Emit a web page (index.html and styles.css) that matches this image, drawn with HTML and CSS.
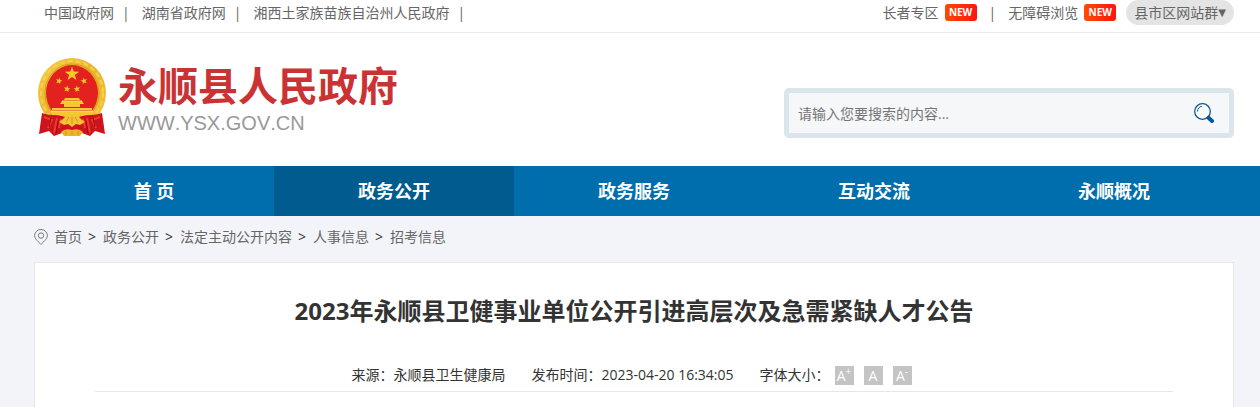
FILE: index.html
```html
<!DOCTYPE html>
<html lang="zh-CN">

<head>
    <meta charset="UTF-8">
    <meta name="viewport" content="width=device-width, initial-scale=1.0">
    <title>2023年永顺县卫健事业单位公开引进高层次及急需紧缺人才公告</title>
    <link rel="stylesheet" href="styles.css">
</head>

<body>
    <div class="top-bar">
        <div class="wrap top-inner">
            <div class="top-links">
                <a href="#">中国政府网</a><span class="line">|</span>
                <a href="#">湖南省政府网</a><span class="line">|</span>
                <a href="#">湘西土家族苗族自治州人民政府</a><span class="line">|</span>
            </div>
            <div class="top-tools">
                <a href="#">长者专区</a><span class="new">NEW</span>
                <span class="line tools-line">|</span>
                <a href="#">无障碍浏览</a><span class="new">NEW</span>
                <button type="button" class="site-group">县市区网站群<span class="arrow">▼</span></button>
            </div>
        </div>
    </div>

    <header class="wrap header">
        <a href="#" class="logo">
            <svg class="emblem" viewBox="0 0 70 80" width="70" height="80" aria-hidden="true">
                <defs>
                    <linearGradient id="gold" x1="0" y1="0" x2="1" y2="1">
                        <stop offset="0" stop-color="#f7cf45" />
                        <stop offset="0.5" stop-color="#e9b32a" />
                        <stop offset="1" stop-color="#f3c636" />
                    </linearGradient>
                    <path id="star" d="M0-10 2.4-3.2 9.5-3.1 3.8 1.2 5.9 8.1 0 4-5.9 8.1-3.8 1.2-9.5-3.1-2.4-3.2Z" />
                </defs>
                <ellipse cx="35" cy="36" rx="34" ry="35" fill="url(#gold)" />
                <ellipse cx="35" cy="36" rx="31" ry="32" fill="none" stroke="#f6d152" stroke-width="2" stroke-dasharray="5 3" />
                <ellipse cx="35" cy="36" rx="27" ry="29" fill="none" stroke="#d99a1c" stroke-width="1" />
                <ellipse cx="35" cy="36" rx="26" ry="28" fill="#e3211e" />
                <g fill="#f6c82f">
                    <use href="#star" transform="translate(35 17) scale(.75)" />
                    <use href="#star" transform="translate(22 24) rotate(15) scale(.36)" />
                    <use href="#star" transform="translate(47 24) rotate(-15) scale(.36)" />
                    <use href="#star" transform="translate(30 32) rotate(10) scale(.36)" />
                    <use href="#star" transform="translate(40 32) rotate(-10) scale(.36)" />
                    <path d="M28 41H42L43 43H27ZM25 44H45L47 47H23ZM27 47H43V50H27Z" />
                    <path d="M15 51H55V53H15ZM13 54H57L54 60H16Z" />
                </g>
                <path d="M25 44H45M14 54H56" stroke="#ffe668" />
                <path d="M5 56Q10 58 16 58Q26 58 35 63Q44 58 54 58Q60 58 65 56L68 77 58 74 53 79 45 76 35 77 25 76 17 79 12 74 2 77Z" fill="#cd131b" />
                <path d="M7 60 15 63 11 71M63 60 55 63 59 71M20 61 17 76M50 61 53 76M24 62 22 71M46 62 48 71" fill="none" stroke="#ee3a2d" stroke-width="2" />
                <path d="M14 61 12 70M56 61 58 70M21 64 19 76M49 64 51 76" fill="none" stroke="#980b14" />
                <path d="M26 62 30 58H40L44 62 48 65 43 68 39 67 35 70 31 67 27 68 22 65Z" fill="#f3c335" />
                <path d="M29 65 32 60M41 65 38 60M35 67V60" stroke="#d3951c" />
                <path d="M24 75Q28 71 35 73Q42 71 46 75L43 79H27Z" fill="#edb52a" />
                <path d="M29 74V78M35 74V78M41 74V78" stroke="#d2951c" />
            </svg>
            <span class="logo-text">
                <strong class="logo-name">永顺县人民政府</strong>
                <span class="logo-url">WWW.YSX.GOV.CN</span>
            </span>
        </a>
        <form class="search">
            <input type="text" id="keyword" placeholder="请输入您要搜索的内容..." aria-label="请输入您要搜索的内容">
            <button type="submit" class="search-btn" aria-label="搜索">
                <svg viewBox="0 0 20 20" width="20" height="20">
                    <circle cx="8.5" cy="8.5" r="7.8" fill="#fff" stroke="#0a5797" stroke-width="1.3" />
                    <path d="M3.5 8.5Q3.7 4 8 3.2" fill="none" stroke="#0a5797" />
                    <path d="M14.5 14.8 18 18" stroke="#0a5797" stroke-width="4" stroke-linecap="round" />
                </svg>
            </button>
        </form>
    </header>

    <nav class="nav">
        <div class="wrap nav-list">
            <a href="#">首 页</a>
            <a href="#" class="active">政务公开</a>
            <a href="#">政务服务</a>
            <a href="#">互动交流</a>
            <a href="#">永顺概况</a>
        </div>
    </nav>

    <main class="wrap">
        <div class="position">
            <svg class="pin" viewBox="0 0 14 16" width="14" height="16" fill="none" stroke="#777" aria-hidden="true">
                <path d="M7 15.4C5.3 13.3.6 10.3.6 6.6A6.4 6.1 0 0 1 13.4 6.6C13.4 10.3 8.7 13.3 7 15.4Z" />
                <circle cx="7" cy="6.6" r="2.7" />
            </svg>
            <a href="#">首页</a><span>&gt;</span>
            <a href="#">政务公开</a><span>&gt;</span>
            <a href="#">法定主动公开内容</a><span>&gt;</span>
            <a href="#">人事信息</a><span>&gt;</span>
            <a href="#">招考信息</a>
        </div>

        <article class="content">
            <h1>2023年永顺县卫健事业单位公开引进高层次及急需紧缺人才公告</h1>
            <div class="info">
                <span>来源：永顺县卫生健康局</span>
                <span>发布时间：2023-04-20 16:34:05</span>
                <div class="font-size">
                    <span>字体大小：</span>
                    <button type="button">A<sup>+</sup></button>
                    <button type="button">A</button>
                    <button type="button">A<sup>-</sup></button>
                </div>
            </div>
        </article>
    </main>
</body>

</html>
```

FILE: styles.css
```css
* {
    box-sizing: border-box;
    margin: 0;
    padding: 0;
}

body {
    background-color: #f3f4f9;
    color: #333;
    font-family: "Open Sans", "Noto Sans CJK SC", sans-serif;
    font-size: 14px;
    line-height: 24px;
}

a {
    color: #666;
    text-decoration: none;
}

button,
input {
    border: none;
    background: none;
    font-family: inherit;
    font-size: 14px;
}

button {
    cursor: pointer;
}

.wrap {
    padding: 0 26px 0 34px;
}

/* top bar */
.top-bar {
    background-color: #fff;
    border-bottom: 1px solid #ebebeb;
}

.top-inner,
.top-links,
.top-tools {
    display: flex;
    align-items: center;
}

.top-inner {
    justify-content: space-between;
    height: 32px;
    padding-bottom: 7px;
}

.top-links {
    padding-left: 10px;
}

.line {
    margin: 0 12px 0 8px;
    color: #666;
}

.top-tools .tools-line {
    margin: 0 12px;
}

.new {
    width: 32px;
    height: 17px;
    margin-left: 6px;
    border-radius: 3px;
    background: linear-gradient(to right, #ff4a00, #ff1414);
    color: #fff;
    font-size: 10px;
    font-weight: bold;
    line-height: 17px;
    text-align: center;
}

.site-group {
    display: flex;
    margin-left: 10px;
    padding: 0 8px;
    border-radius: 13px;
    background-color: #e4e4e4;
    color: #666;
    line-height: 25px;
}

.arrow {
    font-family: "DejaVu Sans", sans-serif;
    font-size: 10px;
}

/* logo and search */
.header {
    display: flex;
    justify-content: space-between;
    align-items: flex-start;
    height: 133px;
    background-color: #fff;
}

.logo {
    display: flex;
    padding: 24px 0 0 3px;
}

.logo-text {
    display: flex;
    flex-direction: column;
    padding: 5px 0 0 11px;
}

.logo-name {
    color: #cb3233;
    font-size: 40px;
    line-height: 48px;
}

.logo-url {
    color: #999;
    font-family: "Liberation Sans", Arial, sans-serif;
    font-size: 20px;
    font-kerning: none;
    line-height: 26px;
}

.search {
    display: flex;
    width: 450px;
    height: 50px;
    margin-top: 55px;
    border: 5px solid #dbe6ec;
    border-radius: 5px;
    background-color: #f5f7f9;
}

.search input {
    flex: 1;
    padding-left: 9px;
    outline: none;
}

.search input::placeholder {
    color: #757575;
}

.search-btn {
    display: flex;
    align-items: center;
    padding: 0 15px;
}

/* nav */
.nav {
    background-color: #006dad;
}

.nav-list {
    display: flex;
}

.nav-list a {
    flex: 1;
    color: #fff;
    font-size: 18px;
    font-weight: bold;
    line-height: 50px;
    text-align: center;
}

.nav-list .active,
.nav-list a:hover {
    background-color: #005b8f;
}

/* breadcrumb */
.position {
    display: flex;
    align-items: center;
    height: 46px;
    padding-bottom: 4px;
}

.position span {
    margin: 0 7px 0 6px;
}

.pin {
    margin-right: 6px;
}

/* article */
.content {
    padding: 28px 60px 15px;
    border: 1px solid #e6e6e6;
    border-bottom: none;
    background-color: #fff;
}

.content h1 {
    font-size: 24px;
    line-height: 40px;
    text-align: center;
}

.info {
    display: flex;
    justify-content: center;
    gap: 26px;
    margin-top: 32px;
    padding-bottom: 4px;
    border-bottom: 1px solid #e6e6e6;
}

.font-size {
    display: flex;
    align-items: center;
    gap: 10px;
    padding-right: 5px;
}

.font-size span {
    margin-right: -5px;
}

.font-size button {
    width: 19px;
    height: 19px;
    background-color: #c4c4c4;
    color: #fff;
    line-height: 19px;
    white-space: nowrap;
}

.font-size sup {
    font-size: 10px;
    line-height: 0;
}
```
